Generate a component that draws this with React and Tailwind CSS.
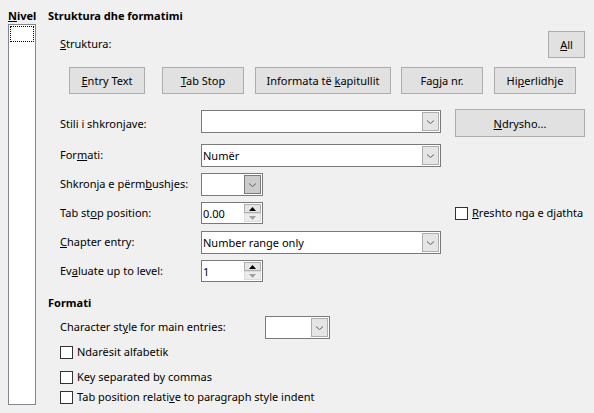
import React from "react";

const Chevron = () => (
  <svg width="9" height="6" viewBox="0 0 9 6" className="block">
    <path d="M1 1.5 L4.5 4.5 L8 1.5" fill="none" stroke="#606060" strokeWidth="1" />
  </svg>
);

function Combo({ w, text, pressed }) {
  return (
    <div className={`${w} h-full bg-white border border-[#7a7a7a] flex`}>
      <div className="flex-1 pl-px flex items-center leading-none">{text}</div>
      <div
        className={
          pressed
            ? "w-[17px] m-px border border-[#7a7a7a] bg-[#cccccc] flex items-center justify-center"
            : "w-[17px] m-px border border-[#adadad] bg-[#e5e5e5] flex items-center justify-center"
        }
      >
        <Chevron />
      </div>
    </div>
  );
}

function Spin({ text }) {
  return (
    <div className="w-[62px] h-full bg-white border border-[#7a7a7a] flex">
      <div className="flex-1 pl-px flex items-center leading-none">{text}</div>
      <div className="w-[17px] m-px flex flex-col">
        <div className="flex-1 border border-[#adadad] bg-[#e5e5e5] flex items-center justify-center">
          <svg width="7" height="4" viewBox="0 0 7 4" className="block">
            <path d="M0 4 L3.5 0 L7 4 Z" fill="#000" />
          </svg>
        </div>
        <div className="flex-1 border border-[#dcdcdc] bg-[#ececec] flex items-center justify-center">
          <svg width="7" height="4" viewBox="0 0 7 4" className="block">
            <path d="M0 0 L3.5 4 L7 0 Z" fill="#a0a0a0" />
          </svg>
        </div>
      </div>
    </div>
  );
}

function Btn({ w, children, cls = "" }) {
  return (
    <div
      className={`${w} ${cls} h-full bg-[#e1e1e1] border border-[#adadad] flex items-center justify-center leading-none`}
    >
      <span>{children}</span>
    </div>
  );
}

const Check = () => <div className="w-[13px] h-[13px] bg-white border border-[#333333] shrink-0" />;

export default function App() {
  return (
    <div className="w-[594px] h-[413px] bg-[#f0f0f0] flex text-[11px] text-black overflow-hidden font-['Noto_Sans',sans-serif]">
      <div className="w-[48px] shrink-0 pl-[8px] pt-[8px]">
        <div className="h-[16px] leading-[16px] font-bold">
          <span className="underline">N</span>ivel
        </div>
        <div className="w-[28px] h-[381px] border border-[#828790] bg-white p-px">
          <div className="h-[16px] border border-dotted border-black" />
        </div>
      </div>

      <div className="flex-1 pt-[8px] flex flex-col">
        <div className="h-[16px] leading-[16px] font-bold">Struktura dhe formatimi</div>

        <div className="mt-[7px] h-[27px] flex items-center justify-between pl-[12px] pr-[9px]">
          <div>
            <span className="underline">S</span>truktura:
          </div>
          <Btn w="w-[37px]">
            <span className="underline">A</span>ll
          </Btn>
        </div>

        <div className="mt-[9px] h-[27px] flex pl-[21px]">
          <Btn w="w-[76px]">
            <span className="underline">E</span>ntry Text
          </Btn>
          <Btn w="w-[82px]" cls="ml-[17px]">
            <span className="underline">T</span>ab Stop
          </Btn>
          <Btn w="w-[136px]" cls="ml-[11px]">
            Informata të <span className="underline">k</span>apitullit
          </Btn>
          <Btn w="w-[82px]" cls="ml-[10px]">
            Fa<span className="underline">g</span>ja nr.
          </Btn>
          <Btn w="w-[82px]" cls="ml-[11px]">
            Hi<span className="underline">p</span>erlidhje
          </Btn>
        </div>

        <div className="mt-[15px] h-[28px] flex items-center pl-[12px]">
          <div className="w-[141px] pt-[3px]">
            Stili i shkron<span className="underline">j</span>ave:
          </div>
          <div className="h-[23px] self-start mt-px">
            <Combo w="w-[240px]" text="" />
          </div>
          <Btn w="w-[130px]" cls="ml-[14px]">
            <span className="underline">N</span>drysho...
          </Btn>
        </div>

        <div className="mt-[7px] h-[23px] flex items-center pl-[12px]">
          <div className="w-[141px]">
            For<span className="underline">m</span>ati:
          </div>
          <Combo w="w-[240px]" text="Numër" />
        </div>

        <div className="mt-[6px] h-[23px] flex items-center pl-[12px]">
          <div className="w-[141px]">
            Shkronja e përm<span className="underline">b</span>ushjes:
          </div>
          <Combo w="w-[62px]" text="" pressed />
        </div>

        <div className="mt-[6px] h-[22px] flex items-center pl-[12px]">
          <div className="w-[141px]">
            Tab st<span className="underline">o</span>p position:
          </div>
          <Spin text="0.00" />
          <div className="ml-[192px] flex items-center">
            <Check />
            <span className="ml-[4px]">
              <span className="underline">R</span>reshto nga e djathta
            </span>
          </div>
        </div>

        <div className="mt-[7px] h-[23px] flex items-center pl-[12px]">
          <div className="w-[141px]">
            <span className="underline">C</span>hapter entry:
          </div>
          <Combo w="w-[240px]" text="Number range only" />
        </div>

        <div className="mt-[6px] h-[22px] flex items-center pl-[12px]">
          <div className="w-[141px]">
            Ev<span className="underline">a</span>luate up to level:
          </div>
          <Spin text="1" />
        </div>

        <div className="mt-[13px] h-[16px] leading-[16px] font-bold">Formati</div>

        <div className="mt-[5px] h-[23px] flex items-center pl-[12px]">
          <div className="w-[205px]">
            Character st<span className="underline">y</span>le for main entries:
          </div>
          <Combo w="w-[65px]" text="" />
        </div>

        <div className="mt-[7px] h-[13px] flex items-center pl-[12px]">
          <Check />
          <span className="ml-[4px]">Ndarësit alfabetik</span>
        </div>
        <div className="mt-[12px] h-[13px] flex items-center pl-[12px]">
          <Check />
          <span className="ml-[4px]">Key separated by commas</span>
        </div>
        <div className="mt-[7px] h-[13px] flex items-center pl-[12px]">
          <Check />
          <span className="ml-[4px]">
            Tab position relati<span className="underline">v</span>e to paragraph style indent
          </span>
        </div>
      </div>
    </div>
  );
}
